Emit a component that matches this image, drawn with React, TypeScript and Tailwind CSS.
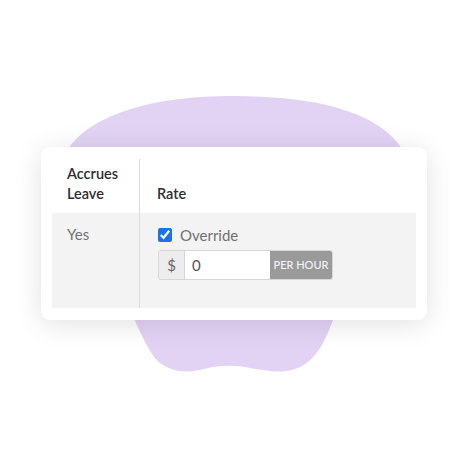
import React from "react";

function Blob() {
  return (
    <svg
      className="absolute inset-0"
      width={468}
      height={468}
      viewBox="0 0 468 468"
      aria-hidden="true"
    >
      <path
        d="M 60 165 C 78 112, 160 96, 232 96 C 312 96, 392 110, 410 165 L 336 312 C 326 340, 318 357, 302 366 C 286 375, 268 371, 250 368 C 236 365, 220 365, 204 369 C 186 374, 166 372, 154 357 C 146 345, 140 332, 130 310 Z"
        fill="#e2d3f5"
      />
    </svg>
  );
}

export default function App() {
  return (
    <div
      className="relative h-[468px] w-[468px] overflow-hidden bg-white"
      style={{ fontFamily: "Lato, 'Open Sans', sans-serif" }}
    >
      <Blob />
      <div className="relative flex h-full w-full flex-col pl-[41px] pt-[147px]">
        <div className="h-[173px] w-[386px] rounded-[9px] bg-white px-[11px] py-3 shadow-[0_4px_28px_rgba(0,0,0,0.12)]">
          <div className="grid h-full grid-cols-[88px_1fr] grid-rows-[54px_1fr]">
            <div className="flex items-end border-r border-[#dcdcdc] pb-[9px] pl-[15px] text-[14.5px] font-semibold leading-[20px] text-[#2e2e2e]">
              Accrues
              <br />
              Leave
            </div>
            <div className="flex items-end pb-[9px] pl-[17px] text-[14.5px] font-semibold leading-[20px] text-[#2e2e2e]">
              Rate
            </div>
            <div className="border-r border-[#dcdcdc] bg-[#f3f3f3] pl-[15px] pt-[11px] text-[15px] leading-[20px] text-[#707070]">
              Yes
            </div>
            <div className="flex flex-col bg-[#f3f3f3] pl-[18px] pt-[13px]">
              <label className="flex items-center gap-[8px] text-[15px] leading-[18px] text-[#707070]">
                <input
                  type="checkbox"
                  defaultChecked
                  className="m-0 h-[14px] w-[14px] accent-[#1a73e8]"
                />
                Override
              </label>
              <div className="mt-[6px] flex h-[30px] w-[175px] overflow-hidden rounded-[3px] border border-[#d6d6d6]">
                <span className="flex w-[26px] items-center justify-center border-r border-[#d6d6d6] bg-[#ededed] text-[15px] text-[#666]">
                  $
                </span>
                <span className="flex flex-1 items-center bg-white pl-[7px] text-[15px] text-[#555]">
                  0
                </span>
                <span className="flex w-[62px] items-center justify-center bg-[#9a9a9a] text-[11px] font-medium text-[#f4f4f4]">
                  PER HOUR
                </span>
              </div>
            </div>
          </div>
        </div>
      </div>
    </div>
  );
}
